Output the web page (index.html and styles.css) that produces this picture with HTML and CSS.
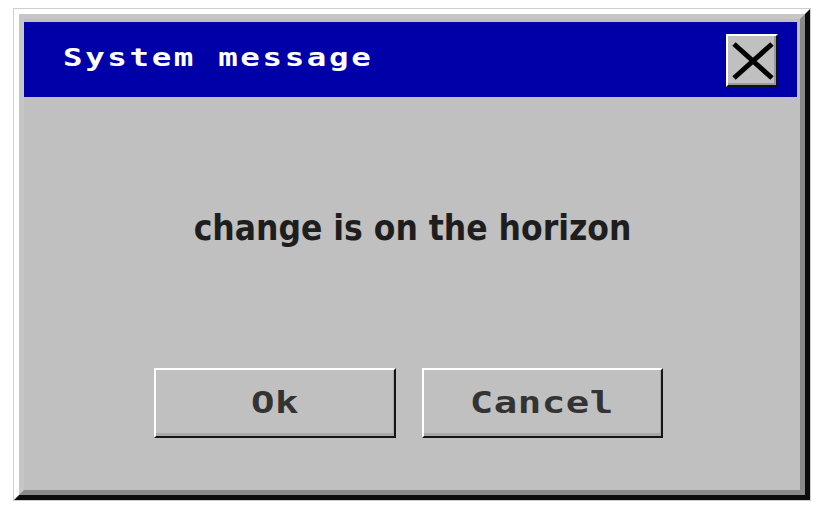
FILE: index.html
```html
<!DOCTYPE html>
<html>
<head>
<meta charset="utf-8">
<link rel="stylesheet" href="styles.css">
</head>
<body>
<div class="window">
  <div class="bevel">
    <div class="frame">
      <div class="titlebar">
        <span class="title">System message</span>
        <div class="close">
          <svg width="48" height="49" viewBox="0 0 48 49">
            <path d="M6 8 L44 42 M44 8 L6 42" stroke="#000" stroke-width="5" fill="none"/>
          </svg>
        </div>
      </div>
      <div class="body">
        <p class="message">change is on the horizon</p>
        <div class="buttons">
          <button class="btn btn-ok"><span class="label">Ok</span></button>
          <button class="btn btn-cancel"><span class="label">Cancel</span></button>
        </div>
      </div>
    </div>
  </div>
</div>
</body>
</html>
```
FILE: styles.css
```css
html, body {
  margin: 0;
  padding: 0;
  background: #ffffff;
}
.window {
  box-sizing: border-box;
  margin: 8px 0 0 13px;
  width: 798px;
  height: 493px;
  border: 1px solid #cfcfcf;
}
.bevel {
  box-sizing: border-box;
  height: 100%;
  border: 5px solid;
  border-color: #ffffff #0c0c0c #0c0c0c #ffffff;
}
.frame {
  box-sizing: border-box;
  height: 100%;
  border: 5px solid;
  border-color: #c6c6c6 #8a8a8a #8a8a8a #c6c6c6;
  background: #c0c0c0;
  padding: 3px 3px 0 0;
  display: flex;
  flex-direction: column;
}
.titlebar {
  height: 75px;
  background: #0000a8;
  display: flex;
  align-items: flex-start;
  justify-content: space-between;
  padding: 0 19px 0 39px;
  flex-shrink: 0;
}
.title {
  display: inline-block;
  margin-top: 21px;
  line-height: 30px;
  font-family: "DejaVu Sans Mono", "Liberation Mono", monospace;
  font-weight: bold;
  font-size: 25px;
  letter-spacing: 2px;
  color: #ffffff;
  transform: scaleX(1.3);
  transform-origin: left center;
}
.close {
  box-sizing: border-box;
  margin-top: 12px;
  width: 52px;
  height: 53px;
  background: #c0c0c0;
  border: 2px solid;
  border-color: #ffffff #111111 #111111 #ffffff;
  box-shadow: inset -2px -2px 0 #9a9a9a;
  display: flex;
  align-items: flex-start;
  justify-content: flex-start;
}
.close svg {
  display: block;
}
.body {
  flex: 1;
  display: flex;
  flex-direction: column;
  align-items: center;
}
.message {
  margin: 111px 0 0 4px;
  line-height: 40px;
  font-family: "DejaVu Sans Condensed", "DejaVu Sans", sans-serif;
  font-weight: bold;
  font-size: 35px;
  color: #1e1e1e;
}
.buttons {
  margin-top: 120px;
  margin-right: 5px;
  display: flex;
  gap: 26px;
}
.btn {
  box-sizing: border-box;
  height: 70px;
  background: #c0c0c0;
  border: 2px solid;
  border-color: #ffffff #151515 #151515 #ffffff;
  box-shadow: inset -1px -3px 0 #a8a8a8;
  padding: 0 0 2px 0;
  display: flex;
  align-items: center;
  justify-content: center;
}
.label {
  display: inline-block;
  font-family: "DejaVu Sans Mono", "Liberation Mono", monospace;
  font-weight: bold;
  font-size: 30px;
  letter-spacing: 0.4px;
  padding-left: 0.4px;
  color: #333333;
  transform: scaleX(1.3);
}
.btn-ok {
  width: 242px;
}
.btn-cancel {
  width: 241px;
}
```
